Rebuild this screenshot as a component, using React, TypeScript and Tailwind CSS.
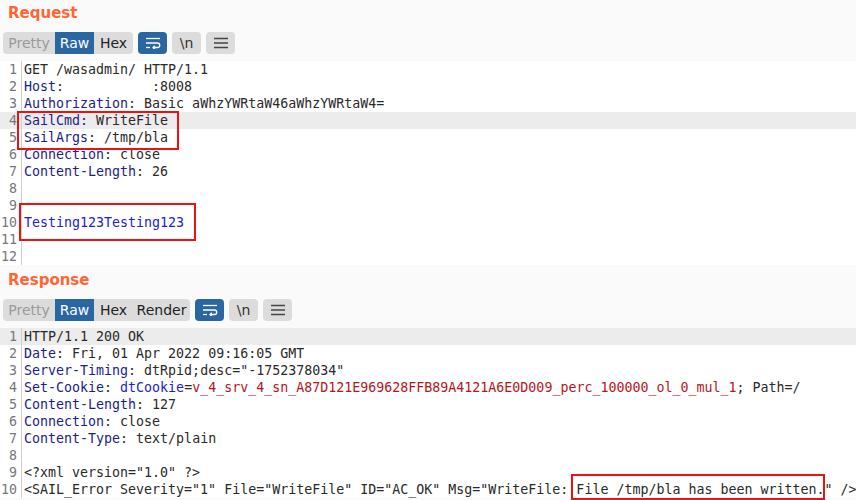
import React from 'react';

type Seg = { t: string; c?: string };
type Line = Seg[];

const KEY = 'text-[#1c1c8a]';
const RED = 'text-[#b3161b]';
const BLUE = 'text-[#1a22d6]';

const requestLines: Line[] = [
  [{ t: 'GET /wasadmin/ HTTP/1.1' }],
  [{ t: 'Host', c: KEY }, { t: ':           :8008' }],
  [{ t: 'Authorization', c: KEY }, { t: ': Basic aWhzYWRtaW46aWhzYWRtaW4=' }],
  [{ t: 'SailCmd', c: KEY }, { t: ': WriteFile' }],
  [{ t: 'SailArgs', c: KEY }, { t: ': /tmp/bla' }],
  [{ t: 'Connection', c: KEY }, { t: ': close' }],
  [{ t: 'Content-Length', c: KEY }, { t: ': 26' }],
  [],
  [],
  [{ t: 'Testing123Testing123', c: BLUE }],
  [],
  [],
];

const responseLines: Line[] = [
  [{ t: 'HTTP/1.1 200 OK' }],
  [{ t: 'Date', c: KEY }, { t: ': Fri, 01 Apr 2022 09:16:05 GMT' }],
  [{ t: 'Server-Timing', c: KEY }, { t: ': dtRpid;desc="-1752378034"' }],
  [
    { t: 'Set-Cookie', c: KEY },
    { t: ': ' },
    { t: 'dtCookie', c: BLUE },
    { t: '=' },
    { t: 'v_4_srv_4_sn_A87D121E969628FFB89A4121A6E0D009_perc_100000_ol_0_mul_1', c: RED },
    { t: '; Path=/' },
  ],
  [{ t: 'Content-Length', c: KEY }, { t: ': 127' }],
  [{ t: 'Connection', c: KEY }, { t: ': close' }],
  [{ t: 'Content-Type', c: KEY }, { t: ': text/plain' }],
  [],
  [{ t: '<?xml version="1.0" ?>' }],
  [{ t: '<SAIL_Error Severity="1" File="WriteFile" ID="AC_OK" Msg="WriteFile: File /tmp/bla has been written." />' }],
];

const WrapIcon = () => (
  <svg width="16" height="12" viewBox="0 0 16 12" fill="none" stroke="currentColor" strokeWidth="1.3">
    <path d="M1 1.5h14" />
    <path d="M1 6h11.5a2.25 2.25 0 0 1 0 4.5H8" />
    <path d="M9.8 8.7L8 10.5l1.8 1.8" />
    <path d="M1 10.5h4" />
  </svg>
);

const MenuIcon = () => (
  <svg width="16" height="12" viewBox="0 0 16 12" fill="none" stroke="currentColor" strokeWidth="1.3">
    <path d="M1 1.5h14M1 6h14M1 10.5h14" />
  </svg>
);

const Toolbar = ({ render }: { render?: boolean }) => (
  <div className="flex items-center h-[22px] pl-[3px] gap-[5px] text-[14px] font-['DejaVu_Sans',sans-serif]">
    <div className="flex h-full rounded-[4px] bg-[#dcdcdc] overflow-hidden">
      <span className="w-[52px] flex items-center justify-center text-[#9a9a9a]">Pretty</span>
      <span className="w-[39px] flex items-center justify-center bg-[#2a66a2] text-white">Raw</span>
      <span className="w-[39px] flex items-center justify-center text-[#222]">Hex</span>
      {render && <span className="w-[57px] flex items-center justify-center text-[#222]">Render</span>}
    </div>
    <div className="w-[29px] h-full rounded-[4px] bg-[#2a66a2] text-white flex items-center justify-center">
      <WrapIcon />
    </div>
    <div className="w-[29px] h-full rounded-[4px] bg-[#dcdcdc] text-[#333] flex items-center justify-center">
      \n
    </div>
    <div className="w-[29px] h-full rounded-[4px] bg-[#dcdcdc] text-[#444] flex items-center justify-center">
      <MenuIcon />
    </div>
  </div>
);

const Editor = ({ lines, active, children }: { lines: Line[]; active: number; children?: React.ReactNode }) => (
  <div className="relative bg-white font-['DejaVu_Sans_Mono',monospace] text-[13.3px] leading-[17px]">
    {lines.map((line, i) => (
      <div key={i} className={`flex h-[17px] ${i === active ? 'bg-[#ececec]' : ''}`}>
        <span className="w-[21px] pr-[4px] text-right text-[#777] shrink-0">{i + 1}</span>
        <span className="border-l border-[#cfcfcf] pl-[2px] whitespace-pre text-[#2a2a2a] overflow-hidden">
          {line.map((s, j) => (
            <span key={j} className={s.c}>
              {s.t}
            </span>
          ))}
        </span>
      </div>
    ))}
    {children}
  </div>
);

const Title = ({ text }: { text: string }) => (
  <div className="h-[26px] leading-[26px] pl-[8px] text-[15px] font-bold text-[#ff6633] font-['DejaVu_Sans',sans-serif]">
    {text}
  </div>
);

export default function App() {
  return (
    <div className="w-[856px] h-[500px] bg-[#fafafa] overflow-hidden">
      <Title text="Request" />
      <div className="mt-[6px]">
        <Toolbar />
      </div>
      <div className="mt-[7px]">
        <Editor lines={requestLines} active={3}>
          <div className="absolute left-[17px] top-[50px] w-[162px] h-[39px] border-2 border-[#ee1111]" />
          <div className="absolute left-[19px] top-[142px] w-[177px] h-[38px] border-2 border-[#ee1111]" />
        </Editor>
      </div>
      <div className="mt-[2px]">
        <Title text="Response" />
      </div>
      <div className="mt-[6px]">
        <Toolbar render />
      </div>
      <div className="mt-[7px]">
        <Editor lines={responseLines} active={0}>
          <div className="absolute left-[571px] top-[146px] w-[254px] h-[26px] border-2 border-[#ee1111]" />
        </Editor>
      </div>
    </div>
  );
}
